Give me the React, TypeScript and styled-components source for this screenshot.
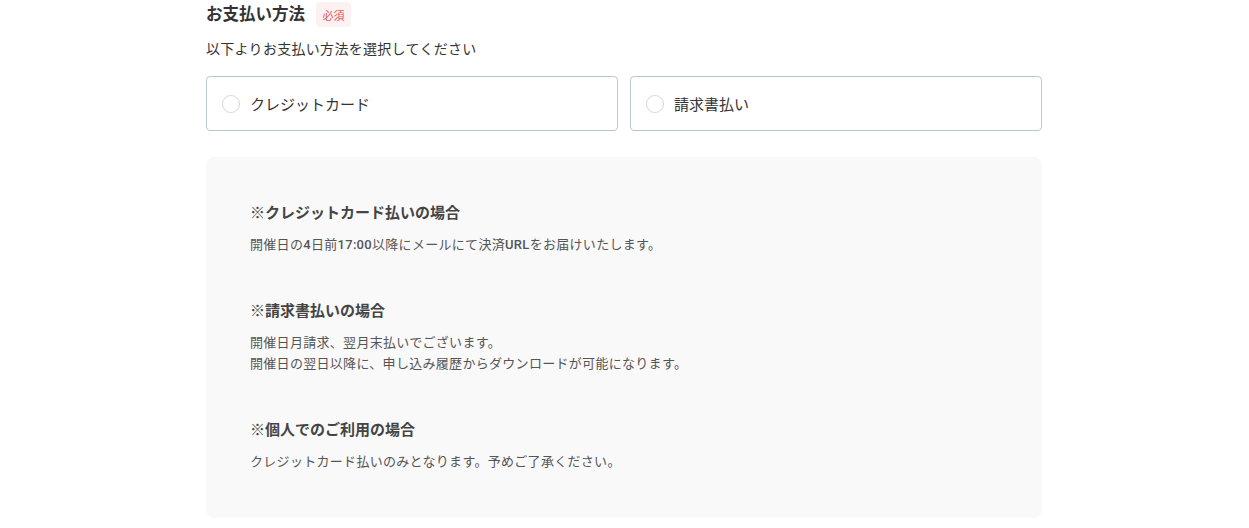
import React from "react";
import styled, { createGlobalStyle } from "styled-components";

const Global = createGlobalStyle`
  html, body { margin: 0; padding: 0; background: #fff; }
  body { font-family: Roboto, "Noto Sans CJK JP", "Noto Sans", sans-serif; color: #333; }
`;

const Page = styled.div`
  width: 836px;
  margin: 0 0 0 206px;
  padding-top: 2px;
`;

const Header = styled.div`
  display: flex;
  align-items: center;
  gap: 11px;
  height: 25px;
`;

const Title = styled.h2`
  margin: 0;
  font-size: 16.5px;
  font-weight: 700;
  color: #333;
  line-height: 25px;
`;

const Badge = styled.span`
  display: inline-flex;
  align-items: center;
  justify-content: center;
  width: 35px;
  height: 25px;
  border-radius: 4px;
  background: #fdf1f1;
  color: #e0585a;
  font-size: 11px;
`;

const Lead = styled.p`
  margin: 11px 0 0;
  font-size: 14px;
  letter-spacing: 0.3px;
  line-height: 22px;
  color: #333;
`;

const Options = styled.div`
  display: grid;
  grid-template-columns: 1fr 1fr;
  gap: 12px;
  margin-top: 16px;
`;

const Option = styled.label`
  display: flex;
  align-items: center;
  gap: 10px;
  height: 55px;
  box-sizing: border-box;
  padding: 0 15px;
  border: 1px solid #b9c8d3;
  border-radius: 4px;
  font-size: 15px;
  color: #333;
  cursor: pointer;
`;

const Radio = styled.span`
  width: 16px;
  height: 16px;
  border-radius: 50%;
  border: 1px solid #d8d8d8;
  background: #fff;
  flex: none;
  margin-top: 1px;
`;

const Panel = styled.div`
  margin-top: 26px;
  background: #f9f9f9;
  border-radius: 8px;
  padding: 44px 44px 46px;
  display: flex;
  flex-direction: column;
  gap: 44px;
`;

const Note = styled.div`
  display: flex;
  flex-direction: column;
  gap: 9px;
`;

const NoteTitle = styled.h3`
  margin: 0;
  font-size: 15px;
  line-height: 24px;
  font-weight: 700;
  color: #444;
`;

const NoteBody = styled.p`
  margin: 0;
  font-size: 13px;
  letter-spacing: 0.3px;
  line-height: 21px;
  color: #555;
`;

const Num = styled.span`
  font-weight: 500;
`;

export default function App() {
  return (
    <>
      <Global />
      <Page>
        <Header>
          <Title>お支払い方法</Title>
          <Badge>必須</Badge>
        </Header>
        <Lead>以下よりお支払い方法を選択してください</Lead>
        <Options>
          <Option>
            <Radio />
            クレジットカード
          </Option>
          <Option>
            <Radio />
            請求書払い
          </Option>
        </Options>
        <Panel>
          <Note>
            <NoteTitle>※クレジットカード払いの場合</NoteTitle>
            <NoteBody>
              開催日の<Num>4</Num>日前<Num>17:00</Num>以降にメールにて決済<Num>URL</Num>をお届けいたします。
            </NoteBody>
          </Note>
          <Note>
            <NoteTitle>※請求書払いの場合</NoteTitle>
            <NoteBody>
              開催日月請求、翌月末払いでございます。
              <br />
              開催日の翌日以降に、申し込み履歴からダウンロードが可能になります。
            </NoteBody>
          </Note>
          <Note>
            <NoteTitle>※個人でのご利用の場合</NoteTitle>
            <NoteBody>クレジットカード払いのみとなります。予めご了承ください。</NoteBody>
          </Note>
        </Panel>
      </Page>
    </>
  );
}
